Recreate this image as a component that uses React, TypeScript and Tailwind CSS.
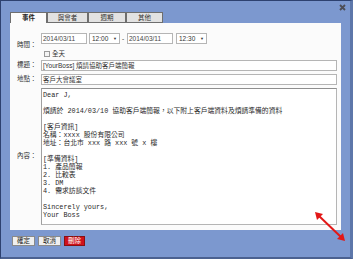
import React from "react";

const ui = {fontFamily: '"Liberation Sans", "Noto Sans CJK TC", sans-serif'};
const mono = {fontFamily: '"Liberation Mono", "Noto Sans CJK TC", monospace'};

const tabs = [
  {id: 1, label: "事件", w: "w-[37px]", active: true},
  {id: 2, label: "與會者", w: "w-[41px]", active: false},
  {id: 3, label: "週期", w: "w-[38px]", active: false},
  {id: 4, label: "其他", w: "w-[37px]", active: false},
];

const body = `Dear J,

煩請於 2014/03/10 協助客戶端簡報，以下附上客戶端資料及煩請準備的資料

[客戶資訊]
名稱：xxxx 股份有限公司
地址：台北市 xxx 路 xxx 號 x 樓

[準備資料]
1. 產品簡報
2. 比較表
3. DM
4. 需求訪談文件

Sincerely yours,
Your Boss`;

const Select: React.FC<{value: string}> = ({value}) => (
  <div className="flex h-[11px] w-[31px] items-center justify-between border border-[#b5b5b5] bg-white pl-[2px] pr-[2px] text-[6.5px] text-[#333]">
    <span>{value}</span>
    <span className="text-[4px]">▼</span>
  </div>
);

const DateInput: React.FC<{value: string}> = ({value}) => (
  <div className="flex h-[11px] w-[46px] items-center border border-[#b5b5b5] bg-white pl-[1px] text-[6.5px] text-[#444]">
    {value}
  </div>
);

const Label: React.FC<{text: string}> = ({text}) => (
  <div className="text-[6.5px] leading-none text-[#2a2a2a]">{text}</div>
);

export default function App() {
  return (
    <div
      style={ui}
      className="relative h-[259px] w-[353px] overflow-hidden border-t border-l border-[#2d4170] border-r-[3px] border-r-[#5d77aa] border-b-2 border-b-[#4b6190] bg-[#7c98cf]"
    >
      {/* close */}
      <svg className="absolute right-[4px] top-[3px]" width="7" height="7" viewBox="0 0 7 7">
        <path d="M1 1L6 6M6 1L1 6" stroke="#4d4d55" strokeWidth="1.8" />
      </svg>

      <div className="ml-[9px] mt-[11px] flex">
        {tabs.map((t) => (
          <div
            key={t.id}
            className={`${t.w} flex h-[11px] items-center justify-center border-t border-l border-r border-[#6e6e6e] text-[6.5px] ${
              t.active ? "bg-[#fbfbfb] font-bold text-[#222]" : "border-b bg-[#e2e2e2] text-[#333]"
            }`}
          >
            {t.label}
          </div>
        ))}
      </div>

      <div className="ml-[9px] h-[207px] w-[331px] bg-[#fbfbfb] pb-[6px] pl-[7px] pr-[4px] pt-[10px]">
        <div className="grid grid-cols-[24px_1fr] items-center gap-y-[3px]">
          <Label text="時間：" />
          <div className="flex flex-col">
            <div className="flex items-center">
              <DateInput value="2014/03/11" />
              <div className="ml-[2px]">
                <Select value="12:00" />
              </div>
              <span className="mx-[2px] w-[3px] text-[6.5px] text-[#333]">-</span>
              <DateInput value="2014/03/11" />
              <div className="ml-[3px]">
                <Select value="12:30" />
              </div>
            </div>
            <div className="ml-[3px] mt-[6px] flex h-[7px] items-center gap-[2px] text-[6.5px] text-[#333]">
              <span className="h-[6px] w-[6px] border border-[#9a9a9a] bg-[#f4f4f4]" />
              <span>全天</span>
            </div>
          </div>

          <Label text="標題：" />
          <div className="flex h-[11px] items-center border border-[#b5b5b5] bg-white pl-[1px] text-[6.5px] text-[#333]">
            [YourBoss] 煩請協助客戶端簡報
          </div>

          <Label text="地點：" />
          <div className="flex h-[11px] items-center border border-[#b5b5b5] bg-white pl-[1px] text-[6.5px] text-[#333]">
            客戶大會議室
          </div>

          <Label text="內容：" />
          <textarea
            readOnly
            value={body}
            style={mono}
            className="h-[137px] w-full resize-none overflow-hidden border border-[#b5b5b5] border-t-[#8f8f8f] border-l-[#a0a0a0] bg-white px-[1px] pt-[2px] text-[6.8px] leading-[8px] text-[#2a2a2a] outline-none"
          />
        </div>
      </div>

      <div className="ml-[11px] mt-[6px] flex gap-[3px] text-[6.5px]">
        <button className="flex h-[10px] w-[23px] items-center justify-center border border-[#8a8a8a] bg-[#efefef] text-[#222]">
          確定
        </button>
        <button className="flex h-[10px] w-[23px] items-center justify-center border border-[#8a8a8a] bg-[#efefef] text-[#222]">
          取消
        </button>
        <button className="flex h-[10px] w-[21px] items-center justify-center border border-[#8a1010] bg-[#d0111b] text-white">
          刪除
        </button>
      </div>

      {/* resize hint arrow */}
      <svg className="absolute left-[312px] top-[210px]" width="34" height="32" viewBox="0 0 34 32">
        <path d="M5 4L29 27" stroke="#e21818" strokeWidth="2" />
        <path d="M2 1L10 3L4 9Z" fill="#e21818" />
        <path d="M32 30L24 28L30 22Z" fill="#e21818" />
      </svg>
    </div>
  );
}
